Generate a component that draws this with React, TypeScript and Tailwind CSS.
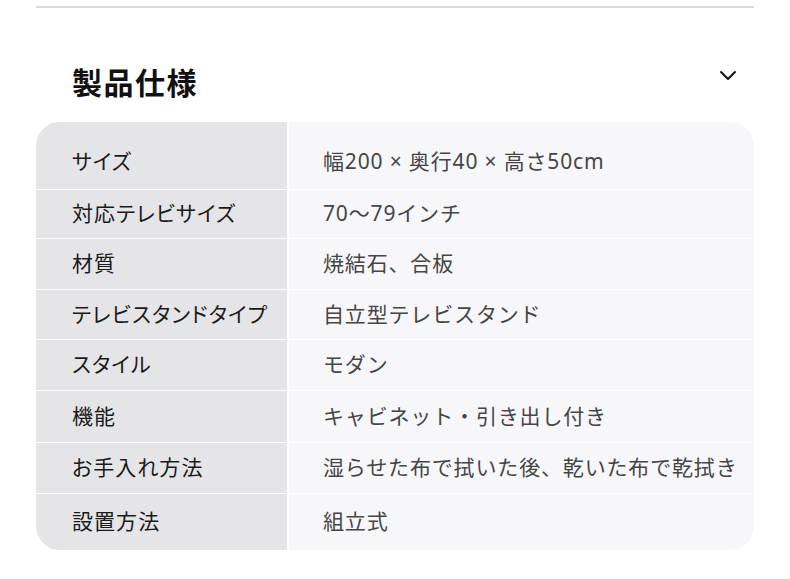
import React from "react";

const rows: { label: string; value: string; h: string }[] = [
  { label: "サイズ", value: "幅200 × 奥行40 × 高さ50cm", h: "h-[67px] pt-[12px]" },
  { label: "対応テレビサイズ", value: "70〜79インチ", h: "h-[48px]" },
  { label: "材質", value: "焼結石、合板", h: "h-[50px]" },
  { label: "テレビスタンドタイプ", value: "自立型テレビスタンド", h: "h-[49px]" },
  { label: "スタイル", value: "モダン", h: "h-[50px]" },
  { label: "機能", value: "キャビネット・引き出し付き", h: "h-[51px]" },
  { label: "お手入れ方法", value: "湿らせた布で拭いた後、乾いた布で乾拭き", h: "h-[50px]" },
  { label: "設置方法", value: "組立式", h: "h-[56px]" },
];

export default function App() {
  return (
    <div
      className="w-[790px] h-[579px] bg-white px-[36px] pt-[6px] overflow-hidden"
      style={{ fontFamily: '"Noto Sans", "Noto Sans CJK JP", sans-serif' }}
    >
      <div className="h-[2px] bg-[#dadada]" />
      <div className="flex items-start justify-between pl-[36px] pt-[56px] pb-[24px]">
        <h2
          className="text-[30px] leading-[34px] font-bold tracking-[0.05em] text-[#111]"
          style={{ fontFamily: '"Noto Sans CJK JP", sans-serif' }}
        >
          製品仕様
        </h2>
        <svg
          width="18"
          height="12"
          viewBox="0 0 18 12"
          className="mt-[6px] mr-[17px]"
          fill="none"
          stroke="#111"
          strokeWidth="2"
          strokeLinecap="round"
          strokeLinejoin="round"
        >
          <path d="M2 2 L9 9 L16 2" />
        </svg>
      </div>
      <div className="rounded-[24px] overflow-hidden">
        {rows.map((r, i) => (
          <div
            key={r.label}
            className={`flex ${i > 0 ? "border-t border-white" : ""}`}
          >
            <div
              className={`w-[251px] shrink-0 bg-[#e5e5e7] flex items-center pl-[36px] text-[21px] tracking-[0.05em] text-[#1a1a1a] whitespace-nowrap [font-feature-settings:'palt'] ${r.h}`}
            >
              {r.label}
            </div>
            <div
              className={`flex-1 border-l-2 border-white bg-[#f7f7f9] flex items-center pl-[34px] text-[21px] tracking-[0.04em] text-[#454545] whitespace-nowrap ${r.h}`}
            >
              {r.value}
            </div>
          </div>
        ))}
      </div>
    </div>
  );
}
